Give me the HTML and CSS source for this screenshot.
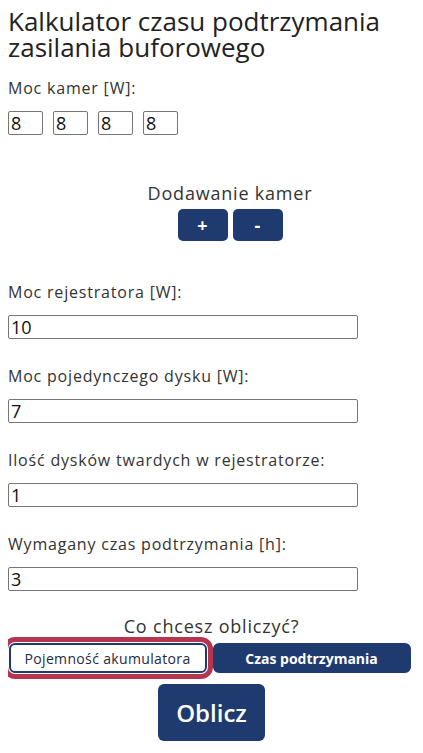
FILE: index.html
```html
<!DOCTYPE html>
<html lang="pl">
<head>
    <meta charset="UTF-8">
    <meta name="viewport" content="width=device-width, initial-scale=1.0">
    <title>Kalkulator czasu podtrzymania</title>
    <link rel="stylesheet" href="styles.css">
</head>
<body>
    <h1>Kalkulator czasu podtrzymania zasilania buforowego</h1>

    <!-- Kamery -->
    <label class="label label-cams">Moc kamer [W]:</label>
    <div class="cams">
        <input type="text" class="cam" value="8">
        <input type="text" class="cam" value="8">
        <input type="text" class="cam" value="8">
        <input type="text" class="cam" value="8">
    </div>

    <div class="add-cams">
        <p>Dodawanie kamer</p>
        <div class="add-buttons">
            <button class="btn-small">+</button>
            <button class="btn-small">-</button>
        </div>
    </div>

    <!-- Pola -->
    <div class="field first">
        <label class="label">Moc rejestratora [W]:</label>
        <input type="text" class="wide" value="10">
    </div>
    <div class="field">
        <label class="label">Moc pojedynczego dysku [W]:</label>
        <input type="text" class="wide" value="7">
    </div>
    <div class="field">
        <label class="label">Ilość dysków twardych w rejestratorze:</label>
        <input type="text" class="wide" value="1">
    </div>
    <div class="field">
        <label class="label">Wymagany czas podtrzymania [h]:</label>
        <input type="text" class="wide" value="3">
    </div>

    <!-- Wybór -->
    <div class="choice">
        <p>Co chcesz obliczyć?</p>
        <div class="choice-buttons">
            <button class="btn-choice active">Pojemność akumulatora</button>
            <button class="btn-choice">Czas podtrzymania</button>
        </div>
        <button class="btn-calc">Oblicz</button>
    </div>
</body>
</html>
```

FILE: styles.css
```css
body {
    font-family: "Open Sans", "DejaVu Sans", sans-serif;
    margin: 8px;
    color: #222;
    background: #fff;
}
h1 {
    font-size: 26px;
    font-weight: 500;
    line-height: 26px;
    margin: 0;
    color: #222;
}
.label {
    display: block;
    font-size: 16px;
    line-height: 20px;
    letter-spacing: 0.8px;
    color: #333;
}
.label-cams {
    margin-top: 18px;
}
.cams {
    display: flex;
    gap: 10px;
    margin-top: 13px;
}
input {
    font-family: inherit;
    font-size: 18px;
    color: #111;
    border: 1px solid #767676;
    border-radius: 2px;
    box-sizing: border-box;
    height: 24px;
    padding: 0 2px;
    margin: 0;
}
.cam {
    width: 35px;
}
.add-cams {
    text-align: center;
    margin-top: 47px;
    margin-left: 37px;
}
.add-cams p, .choice p {
    margin: 0;
    font-size: 18px;
    line-height: 22px;
    letter-spacing: 0.8px;
    color: #333;
}
.add-buttons {
    display: flex;
    justify-content: center;
    gap: 5px;
    margin-top: 5px;
}
.btn-small {
    width: 50px;
    height: 32px;
    border: none;
    border-radius: 5px;
    background: #1e3a6e;
    color: #fff;
    font-family: inherit;
    font-size: 18px;
    font-weight: 700;
}
.field {
    margin-top: 27px;
}
.field.first {
    margin-top: 41px;
}
.wide {
    display: block;
    width: 350px;
    margin-top: 13px;
}
.choice {
    text-align: center;
    margin-top: 24px;
}
.choice-buttons {
    display: flex;
    justify-content: center;
    gap: 6px;
    margin-top: 6px;
    padding-right: 4px;
}
.btn-choice {
    width: 198px;
    height: 30px;
    border: 2px solid #1e3a6e;
    border-radius: 6px;
    background: #1e3a6e;
    color: #fff;
    font-family: inherit;
    font-size: 14px;
    font-weight: 700;
}
.btn-choice.active {
    background: #fff;
    color: #1f2a44;
    font-weight: 500;
    letter-spacing: 0.35px;
    outline: 5px solid #b5354f;
    outline-offset: 1px;
}
.btn-calc {
    display: block;
    margin: 11px auto 0;
    width: 107px;
    height: 57px;
    border: none;
    border-radius: 6px;
    background: #1e3a6e;
    color: #fff;
    font-family: inherit;
    font-size: 24px;
    font-weight: 600;
}
```
